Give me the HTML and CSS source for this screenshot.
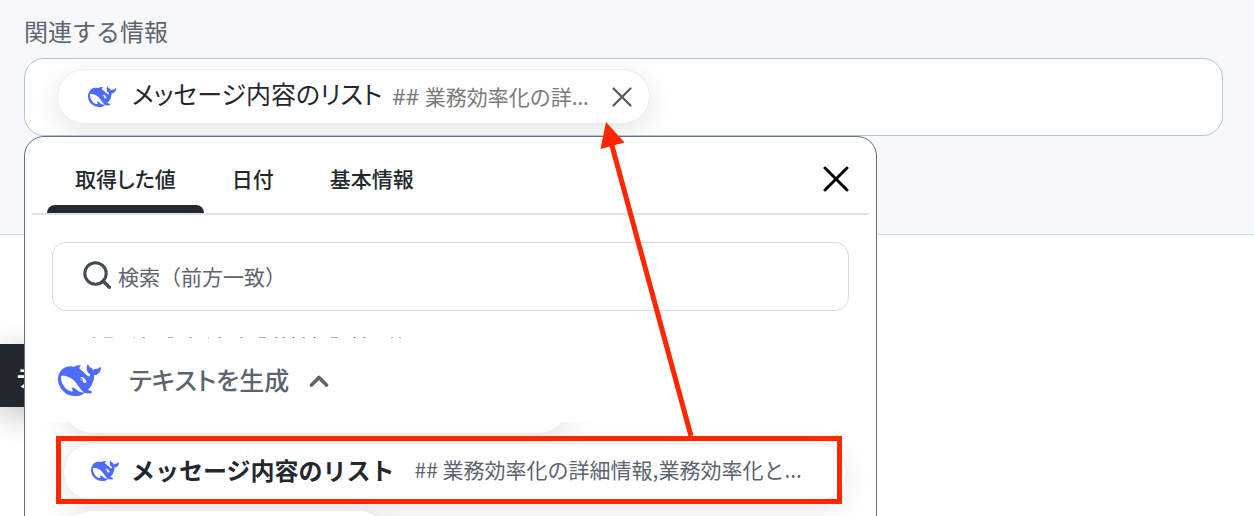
FILE: index.html
```html
<!DOCTYPE html>
<html lang="ja">
<head>
<meta charset="utf-8">
<meta name="viewport" content="width=device-width, initial-scale=1">
<title>関連する情報</title>
<link rel="stylesheet" href="styles.css">
</head>
<body>
<svg class="symbols" aria-hidden="true">
  <symbol id="whale" viewBox="0 0 24 24">
    <path fill="#4d6bfe" d="M23.748 4.482c-.254-.124-.364.113-.512.234-.051.039-.094.09-.137.136-.372.397-.806.657-1.373.626-.829-.046-1.537.214-2.163.848-.133-.782-.575-1.248-1.247-1.548-.352-.156-.708-.311-.955-.65-.172-.241-.219-.51-.305-.774-.055-.16-.11-.323-.293-.35-.2-.031-.278.136-.356.276-.313.572-.434 1.202-.422 1.84.027 1.436.633 2.58 1.838 3.393.137.093.172.187.129.323-.082.28-.18.552-.266.833-.055.179-.137.217-.329.14a5.526 5.526 0 01-1.736-1.18c-.857-.828-1.631-1.742-2.597-2.458a11.365 11.365 0 00-.689-.471c-.985-.957.13-1.743.388-1.836.27-.098.093-.432-.779-.428-.872.004-1.67.295-2.687.684a3.055 3.055 0 01-.465.137 9.597 9.597 0 00-2.883-.102c-1.885.21-3.39 1.102-4.497 2.623C.082 8.606-.231 10.684.152 12.85c.403 2.284 1.569 4.175 3.36 5.653 1.858 1.533 3.997 2.284 6.438 2.14 1.482-.085 3.133-.284 4.994-1.86.47.234.962.327 1.78.397.63.059 1.236-.03 1.705-.128.735-.156.684-.837.419-.961-2.155-1.004-1.682-.595-2.113-.926 1.096-1.296 2.746-2.642 3.392-7.003.05-.347.007-.565 0-.845-.004-.17.035-.237.23-.256a4.173 4.173 0 001.545-.475c1.396-.763 1.96-2.015 2.093-3.517.02-.23-.004-.467-.247-.588zM11.581 18c-2.089-1.642-3.102-2.183-3.52-2.16-.392.024-.321.471-.235.763.09.288.207.486.371.739.114.167.192.416-.113.603-.673.416-1.842-.14-1.897-.167-1.361-.802-2.5-1.86-3.301-3.307-.774-1.393-1.224-2.887-1.298-4.482-.02-.386.093-.522.477-.592a4.696 4.696 0 011.529-.039c2.132.312 3.946 1.265 5.468 2.774.868.86 1.525 1.887 2.202 2.891.72 1.066 1.494 2.082 2.48 2.914.348.292.625.514.891.677-.802.09-2.14.11-3.054-.614zm1-6.44a.306.306 0 01.415-.287.302.302 0 01.2.288.306.306 0 01-.31.307.303.303 0 01-.304-.308zm3.11 1.596c-.2.081-.399.151-.59.16a1.245 1.245 0 01-.798-.254c-.274-.23-.47-.358-.552-.758a1.73 1.73 0 01.016-.588c.07-.327-.008-.537-.239-.727-.187-.156-.426-.199-.688-.199a.559.559 0 01-.254-.078c-.11-.054-.2-.19-.114-.358.028-.054.16-.186.192-.21.356-.202.767-.136 1.146.016.352.144.618.408 1.001.782.391.451.462.576.685.914.176.265.336.537.445.848.067.195-.019.354-.25.452z"/>
  </symbol>
</svg>

<main class="page">
  <section class="form">
    <h2 class="form-label">関連する情報</h2>
    <div class="field">
      <div class="field-box">
        <div class="chip chip-selected">
          <svg class="whale-small" aria-hidden="true"><use href="#whale"/></svg>
          <span class="chip-title">メッセージ内容のリスト</span>
          <span class="chip-detail">## 業務効率化の詳...</span>
          <button class="icon-button" type="button" aria-label="削除">
            <svg width="22" height="22" viewBox="0 0 22 22"><path d="M2.5 2.5l17 17M19.5 2.5l-17 17" stroke="#4f5a66" stroke-width="2.2" stroke-linecap="round"/></svg>
          </button>
        </div>
      </div>

      <div class="picker">
        <div class="picker-head">
          <nav class="tabs">
            <button class="tab tab-active" type="button">取得した値</button>
            <button class="tab" type="button">日付</button>
            <button class="tab" type="button">基本情報</button>
          </nav>
          <button class="icon-button" type="button" aria-label="閉じる">
            <svg width="26" height="26" viewBox="0 0 26 26"><path d="M2 2l22 22M24 2L2 24" stroke="#000" stroke-width="3" stroke-linecap="round"/></svg>
          </button>
        </div>
        <label class="search">
          <svg width="28" height="28" viewBox="0 0 28 28" fill="none" stroke="#434a54"><circle cx="12.5" cy="12.5" r="10.7" stroke-width="3"/><path d="M20 20l6.3 6.3" stroke-width="3.4" stroke-linecap="round"/></svg>
          <input class="search-input" type="text" placeholder="検索（前方一致）" aria-label="検索（前方一致）">
        </label>
        <div class="list">
          <svg class="row-edge" width="400" height="2" viewBox="0 0 400 2" aria-hidden="true">
            <path stroke="#b3bdfb" d="M29 .5h3M41 .5h9"/>
            <path stroke="#adadad" d="M71 .5h1M79 .5h3M105 .5h5M126 .5h3M145 .5h1M155 .5h3M177 .5h3M196 .5h7M212 .5h3M219 .5h3M229 .5h3M239 .5h3M250 .5h3M268 .5h7M290 .5h3M300 .5h3M328 .5h2M336 .5h2"/>
          </svg>
          <div class="group">
            <svg class="whale-large" aria-hidden="true"><use href="#whale"/></svg>
            <button class="group-toggle" type="button"><span class="group-name">テキストを生成</span>
              <svg width="20" height="14" viewBox="0 0 20 14" fill="none"><path d="M2.500 11L10 3.500L17.500 11" stroke="#5b6470" stroke-width="3.600" stroke-linecap="round" stroke-linejoin="round"/></svg>
            </button>
          </div>
          <div class="chip chip-row chip-before"></div>
          <button class="chip chip-row" type="button">
            <svg class="whale-small" aria-hidden="true"><use href="#whale"/></svg>
            <span class="chip-title">メッセージ内容のリスト</span>
            <span class="chip-detail">## 業務効率化の詳細情報,業務効率化と...</span>
          </button>
          <div class="chip chip-row chip-after"></div>
        </div>
      </div>
    </div>
  </section>
  <button class="side-button" type="button">テキスト</button>
  <svg class="marks" width="1254" height="516" viewBox="0 0 1254 516" aria-hidden="true">
    <rect x="58.500" y="438.500" width="781" height="63" fill="none" stroke="#ff2600" stroke-width="5"/>
    <path d="M691 436L611 142" stroke="#ff2600" stroke-width="5"/>
    <path d="M606 122L624.500 142.500L600.500 149Z" fill="#ff2600"/>
  </svg>
</main>
</body>
</html>
```
FILE: styles.css
```css
* { box-sizing: border-box; }

body {
  margin: 0;
  background: #fff;
  color: #23282f;
  font-family: "Noto Sans CJK JP", sans-serif;
}

button {
  margin: 0;
  padding: 0;
  border: 0;
  background: none;
  color: inherit;
  font: inherit;
}

svg { display: block; flex: none; }

.symbols { position: absolute; width: 0; height: 0; }

.page {
  position: relative;
  height: 100vh;
  overflow: hidden;
}

.form {
  padding: 13px 31px 98px 24px;
  border-bottom: 1px solid #cfd7df;
  background: #f6f8fa;
}

.form-label {
  margin: 0 0 9px;
  color: #5b6470;
  font-size: 24px;
  font-weight: 400;
  line-height: 36px;
}

.field { position: relative; }

.field-box {
  padding: 10px 32px 11px;
  border: 1px solid #b8c2cc;
  border-radius: 20px;
  background: #fff;
  overflow: hidden;
}

.chip {
  display: flex;
  align-items: center;
  border: 1px solid #e8edf2;
  border-radius: 30px;
  background: #fff;
  box-shadow: 0 8px 32px rgba(0, 0, 0, 0.1);
  white-space: nowrap;
}

.chip-selected {
  width: fit-content;
  height: 55px;
  padding: 0 16px 0 30px;
}

.chip-selected .chip-title {
  margin: 0 10px 0 16px;
  padding-bottom: 8px;
  font-size: 25px;
  font-feature-settings: "palt";
  line-height: 36px;
}

.chip-selected .chip-detail {
  margin-right: 22px;
  padding-bottom: 2px;
  color: #7a7a7a;
  font-family: "Noto Sans", "Noto Sans CJK JP", sans-serif;
  font-size: 21px;
}

.whale-small { width: 28px; height: 28px; }
.whale-large { width: 43px; height: 43px; }

.picker {
  position: absolute;
  z-index: 1;
  top: 100%;
  left: 0;
  width: 853px;
  max-width: 100%;
  border: 1px solid #66707b;
  border-radius: 20px;
  background: #fff;
}

.picker-head {
  display: flex;
  align-items: center;
  justify-content: space-between;
  margin: 0 7px;
  padding: 0 20px 0 15px;
  border-bottom: 2px solid #dde3e8;
}

.picker-head .icon-button { padding-top: 8px; }

.tabs { display: flex; }

.tab {
  position: relative;
  height: 76px;
  padding: 6px 28px 0;
  font-size: 21px;
  font-weight: 500;
  font-feature-settings: "palt";
}

.tab-active::after {
  content: "";
  position: absolute;
  right: 0;
  bottom: 0;
  left: 0;
  height: 8px;
  border-radius: 8px 8px 0 0;
  background: #232830;
}

.search {
  display: flex;
  align-items: center;
  gap: 7px;
  height: 69px;
  margin: 27px 27px 0;
  padding: 0 30px 4px;
  border: 1px solid #d3dbe3;
  border-radius: 14px;
}

.search-input {
  flex: 1;
  min-width: 0;
  padding: 2px 0 0;
  border: 0;
  outline: 0;
  background: none;
  font: 400 21px "Noto Sans CJK JP", sans-serif;
}

.search-input::placeholder { color: #5b6470; opacity: 1; }

.list {
  margin-top: 26px;
  padding: 0 29px 0 38px;
  overflow: hidden;
}

.group {
  position: relative;
  z-index: 1;
  display: flex;
  align-items: center;
  gap: 28px;
  height: 83px;
  margin: 0 -29px 0 -38px;
  padding-left: 33px;
  background: #fff;
}

.group-toggle {
  display: flex;
  align-items: center;
  gap: 20px;
  color: #5b6470;
  font-size: 25px;
  font-weight: 500;
  font-feature-settings: "palt";
}

.group-name { padding-bottom: 4px; }

.chip-row {
  width: 100%;
  height: 58px;
  margin-bottom: 9px;
  padding: 0 27px 2px;
  text-align: left;
}

.chip-row .chip-title {
  margin: 0 20px 0 12px;
  padding-bottom: 4px;
  font-size: 24px;
  font-weight: 700;
}

.chip-row .chip-detail {
  padding-bottom: 4px;
  color: #5b6470;
  font-size: 21px;
}

.chip-before { width: 505px; margin-top: -46px; }
.chip-after { width: 325px; }

.side-button {
  position: absolute;
  top: 344px;
  left: 0;
  width: 120px;
  height: 63px;
  padding-left: 16px;
  background: #23282f;
  box-shadow: 0 8px 32px rgba(0, 0, 0, 0.25);
  color: #fff;
  font-size: 22px;
  font-weight: 700;
  text-align: left;
}

.marks {
  position: absolute;
  z-index: 2;
  top: 0;
  left: 0;
  pointer-events: none;
}
```
